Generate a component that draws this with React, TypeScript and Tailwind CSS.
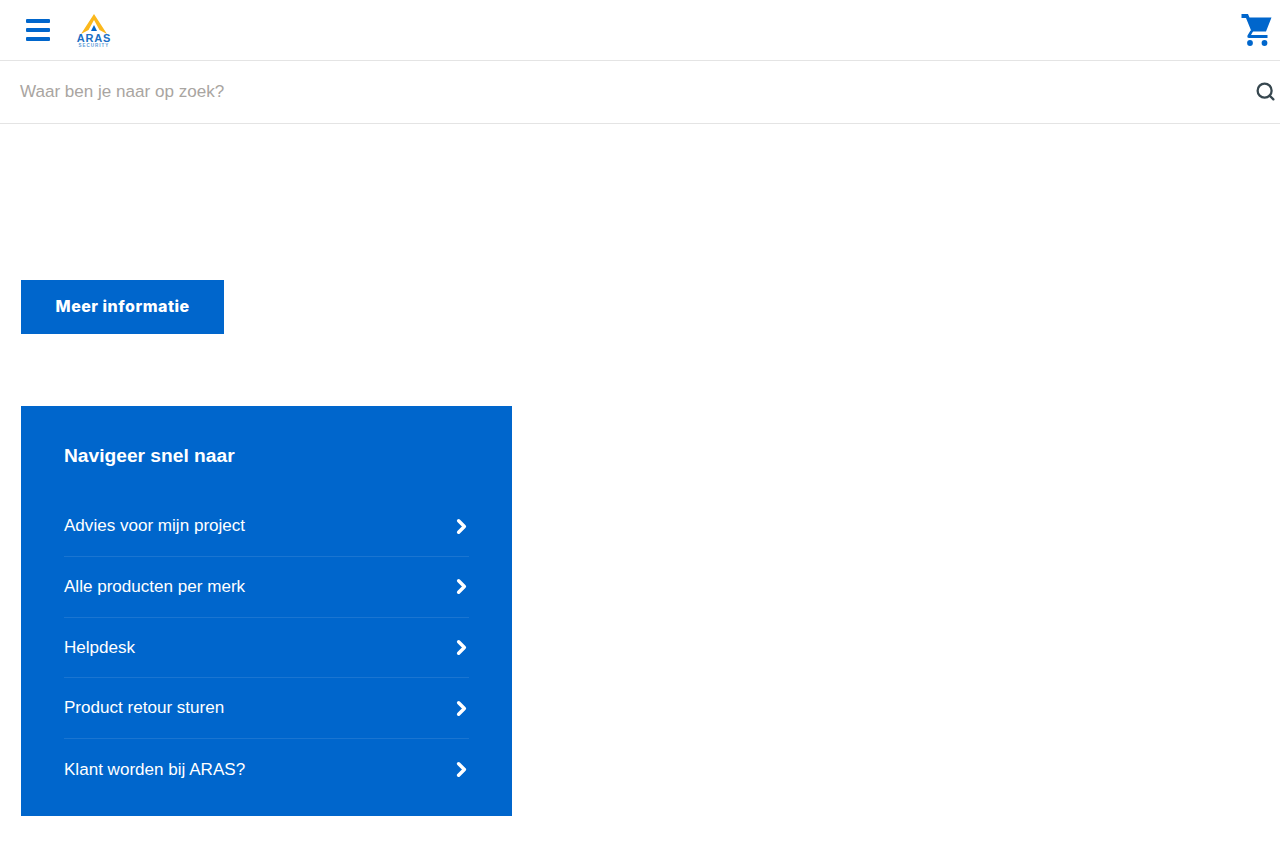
import React from 'react'
import { Search, ChevronRight } from 'lucide-react'

const links = [
  'Advies voor mijn project',
  'Alle producten per merk',
  'Helpdesk',
  'Product retour sturen',
  'Klant worden bij ARAS?',
]

function Logo() {
  return (
    <div className="flex w-[36px] flex-col items-center">
      <svg width="26" height="20" viewBox="0 0 26 20" className="mt-[1px]">
        <path d="M13 0 L26 20 L18.5 16 L13 6 L7.5 16 L0 20 Z" fill="#fbb81c" />
        <path d="M13 11 L16 17 H10 Z" fill="#0066cc" />
      </svg>
      <span className="mt-[-1px] text-[11px] leading-[10px] font-bold tracking-[0.8px] text-[#1a6fc4]">ARAS</span>
      <span className="mt-px text-[4.5px] leading-[4px] font-bold tracking-[1px] text-[#5a9ad8]">SECURITY</span>
    </div>
  )
}

function Cart() {
  return (
    <svg width="34" height="36" viewBox="0 0 34 36" className="mt-[2px] text-[#0066cc]" fill="currentColor">
      <path d="M1.5 1 H8 L9.5 4.5 H31.5 L26 18.5 H11.5 L6 5 H1.5 Z" />
      <path d="M10.5 17.5 L7.5 22.5 Q6.9 25 9 25 H27.5 V22 H11 L13.5 17.5 Z" />
      <circle cx="10" cy="30" r="2.9" />
      <circle cx="24.5" cy="30" r="2.9" />
    </svg>
  )
}

export default function App() {
  return (
    <div className="min-h-[853px] bg-white font-['Liberation_Sans',Arial,sans-serif]">
      {/* Header */}
      <header className="flex h-[61px] items-center justify-between border-b border-[#e4e4e4] pr-[6px] pl-[26px]">
        <div className="flex items-center gap-[26px]">
          <div className="flex w-6 flex-col gap-[5.5px]">
            <span className="h-[3.5px] rounded-[1px] bg-[#0066cc]" />
            <span className="h-[3.5px] rounded-[1px] bg-[#0066cc]" />
            <span className="h-[3.5px] rounded-[1px] bg-[#0066cc]" />
          </div>
          <Logo />
        </div>
        <Cart />
      </header>

      {/* Search */}
      <div className="flex h-[63px] items-center justify-between border-b border-[#e4e4e4] pr-[4px] pl-5">
        <span className="text-[17.07px] leading-5 text-[#a9a5a1]">Waar ben je naar op zoek?</span>
        <Search className="mb-px h-[21px] w-[21px] text-[#37474f]" strokeWidth={2.6} />
      </div>

      <main className="pt-[156.3px] pl-[21.3px]">
        <button className="flex h-[53.3px] w-[202.7px] items-center justify-center bg-[#0066cc] pb-px font-['Inter',sans-serif] text-[16px] font-extrabold tracking-[0.5px] text-white">
          Meer informatie
        </button>

        {/* Quick nav */}
        <section className="mt-[72.7px] h-[409.7px] w-[490.7px] bg-[#0066cc] px-[42.7px] pt-[38px] text-white">
          <h2 className="text-[19.2px] leading-6 font-bold">Navigeer snel naar</h2>
          <ul className="mt-[28px]">
            {links.map((label, i) => (
              <li
                key={label}
                className={
                  i < links.length - 1
                    ? 'flex h-[60.7px] items-center justify-between border-b border-[#1a75d1] text-[17.07px]'
                    : 'flex h-[60.7px] items-center justify-between text-[17.07px]'
                }
              >
                <span>{label}</span>
                <ChevronRight className="-mr-[4px] h-[23px] w-[23px]" strokeWidth={3.6} />
              </li>
            ))}
          </ul>
        </section>
      </main>
    </div>
  )
}
